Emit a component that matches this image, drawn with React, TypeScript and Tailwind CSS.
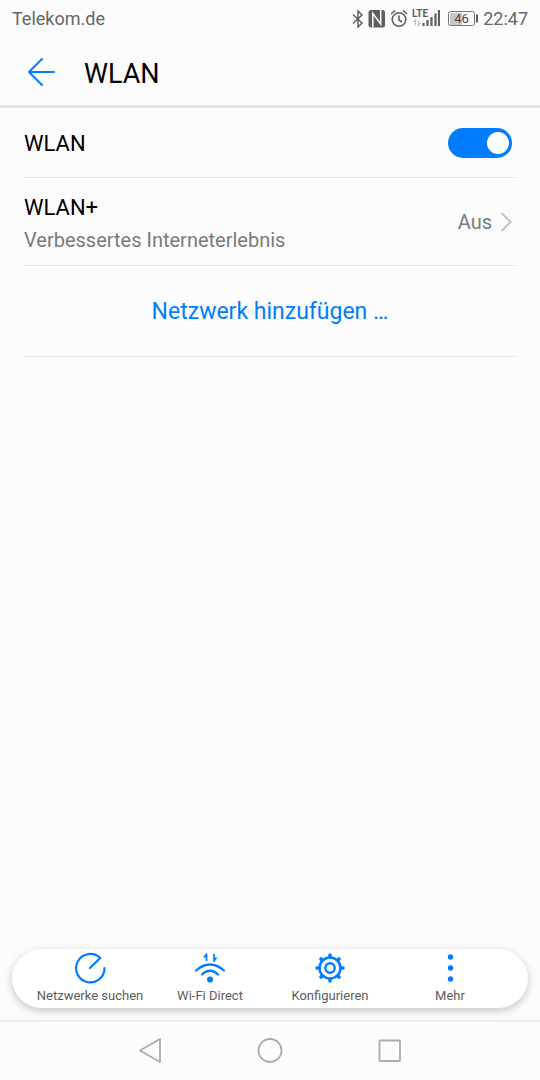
import { useState } from "react";
import type { ReactNode } from "react";

function StatusBar() {
  return (
    <div className="flex h-[38px] items-center justify-between px-3 text-lg text-[#666666]">
      <span>Telekom.de</span>
      <div className="flex items-center">
        {/* Bluetooth */}
        <svg className="mr-1" width="12" height="20" viewBox="0 0 12 20" fill="none" stroke="#5f5f5f" strokeWidth="1.5">
          <path d="M1 5.5 10 14 6 18V2l4 4-9 8.5" />
        </svg>
        {/* NFC */}
        <svg className="mr-1" width="18" height="20" viewBox="0 0 18 20">
          <rect x="0.5" y="1" width="16.5" height="17.5" rx="2.5" fill="#5f5f5f" />
          <path d="M4.800 18.500V4.500L12.700 15V1" fill="none" stroke="#fcfcfc" strokeWidth="1.500" />
        </svg>
        {/* Alarm */}
        <svg className="mr-1" width="18" height="20" viewBox="0 0 18 20" fill="none" stroke="#5f5f5f" strokeWidth="1.6">
          <circle cx="9" cy="10.500" r="6.800" />
          <path d="M9 6.500V11l3 2M1 5l4-3.500M17 5l-4-3.500" />
        </svg>
        {/* Signal */}
        <svg className="mr-2" width="28" height="20" viewBox="0 0 28 20">
          <text x="0" y="8" fontSize="10" fontWeight="700" fill="#5f5f5f" fontFamily="'Liberation Sans Narrow', Roboto, sans-serif">LTE</text>
          <path d="M3.500 16.500V11l-2 2.500M6.500 11v5.500l2-2.500" fill="none" stroke="#c4c4c4" strokeWidth="1.3" />
          <path d="M11.500 14v3M15.500 11v6M19.500 8v9M23.500 4.500V17M27 1v16" fill="none" stroke="#5f5f5f" strokeWidth="2.200" />
        </svg>
        {/* Battery */}
        <svg className="mr-1" width="31" height="20" viewBox="0 0 31 20">
          <rect x="2" y="4" width="12" height="12" fill="#c8c8c8" />
          <rect x="0.5" y="2.500" width="26" height="14" rx="2" fill="none" stroke="#777777" />
          <path d="M29 5.500v8" stroke="#5f5f5f" strokeWidth="2" />
          <text x="13.5" y="14" textAnchor="middle" fontSize="13" fill="#4a4a4a">46</text>
        </svg>
        <span>22:47</span>
      </div>
    </div>
  );
}

function BarButton({ label, children }: { label: string; children: ReactNode }) {
  return (
    <button type="button" className="flex flex-1 flex-col items-center gap-1 text-[13px] leading-4 text-[#5c5c5c]">
      <svg width="32" height="32" viewBox="0 0 32 32" fill="none" stroke="#007dff" strokeWidth="2.200" strokeLinecap="round" strokeLinejoin="round">
        {children}
      </svg>
      <span className="whitespace-nowrap">{label}</span>
    </button>
  );
}

export default function App() {
  const [enabled, setEnabled] = useState(true);

  return (
    <div className="flex min-h-screen flex-col bg-[#fcfcfc] font-[Roboto,sans-serif]">
      <StatusBar />

      <header className="flex h-[70px] items-center gap-7 border-b-3 border-[#e2e2e2] px-6">
        <button type="button" aria-label="Zurück">
          <svg width="32" height="32" viewBox="0 0 32 32" fill="none" stroke="#007dff" strokeWidth="2" strokeLinecap="round" strokeLinejoin="round">
            <path d="M30 16H5M18 3 5 16l13 13" />
          </svg>
        </button>
        <h1 className="pt-1 text-[27px] leading-8 text-black">WLAN</h1>
      </header>

      <main className="flex-1 px-6">
        <div className="flex h-[70px] items-center justify-between border-b border-[#e6e6e6] pr-1">
          <label htmlFor="wlan" className="pt-0.5 text-[22px] text-black">WLAN</label>
          <input
            id="wlan"
            type="checkbox"
            role="switch"
            checked={enabled}
            onChange={(e) => setEnabled(e.target.checked)}
            className="flex h-[30px] w-16 appearance-none items-center rounded-full bg-[#c8c8c8] px-[3px] before:size-[22px] before:rounded-full before:bg-white checked:justify-end checked:bg-[#007dff]"
          />
        </div>

        <button type="button" className="flex h-[88px] w-full items-center justify-between border-b border-[#e6e6e6] pr-1 text-left">
          <span className="flex flex-col pt-1">
            <span className="text-[22px] leading-8 text-black">WLAN+</span>
            <span className="text-xl leading-8 text-[#7a7a7a]">Verbessertes Interneterlebnis</span>
          </span>
          <span className="flex items-center gap-2 text-xl text-[#7a7a7a]">
            Aus
            <svg width="12" height="20" viewBox="0 0 12 20" fill="none" stroke="#c4c4c4" strokeWidth="2">
              <path d="m1.500 1 9 9-9 9" />
            </svg>
          </span>
        </button>

        <button type="button" className="h-[91px] w-full border-b border-[#e6e6e6] pt-0.5 text-[23px] text-[#007dff]">
          Netzwerk hinzufügen …
        </button>
      </main>

      <div className="px-3 pb-3">
        <div className="flex rounded-full bg-white px-[18px] pt-[3px] pb-1 shadow-[0_3px_8px_rgba(0,0,0,0.22)]">
          <BarButton label="Netzwerke suchen">
            <path d="M30.500 16A14.200 14.200 0 1 1 26.200 6L16 16" />
          </BarButton>
          <BarButton label="Wi-Fi Direct">
            <path d="M2 18.500Q16 6.500 30 18.500M8 22.500q8-7.500 16 0" />
            <circle cx="16" cy="27.500" r="3" fill="#007dff" stroke="none" />
            <path d="M12.500 9V2l-2.500 3.500M20 2v7l2.500-3.500" strokeWidth="1.700" strokeLinecap="butt" />
          </BarButton>
          <BarButton label="Konfigurieren">
            <circle cx="16" cy="16" r="10.500" strokeWidth="2.500" />
            <circle cx="16" cy="16" r="4.700" strokeWidth="2.400" />
            <path d="M16 5V3M16 27v2M5 16H3M27 16h2M8.200 8.200 7 7M23.800 8.200 25 7M8.200 23.800 7 25M23.800 23.800 25 25" strokeWidth="3.600" />
          </BarButton>
          <BarButton label="Mehr">
            <g fill="#007dff" stroke="none">
              <circle cx="16.500" cy="5" r="2.700" />
              <circle cx="16.500" cy="16" r="2.700" />
              <circle cx="16.500" cy="27" r="2.700" />
            </g>
          </BarButton>
        </div>
      </div>

      <nav className="flex h-[60px] items-center justify-center border-t-2 border-[#ebebeb]">
        <button type="button" aria-label="Zurück" className="flex w-[120px] justify-center">
          <svg width="28" height="28" viewBox="0 0 28 28" fill="none" stroke="#acacac" strokeWidth="1.800" strokeLinejoin="round">
            <path d="M24 2v23L4 13.500Z" />
          </svg>
        </button>
        <button type="button" aria-label="Startbildschirm" className="flex w-[120px] justify-center">
          <svg width="28" height="28" viewBox="0 0 28 28" fill="none" stroke="#acacac" strokeWidth="1.800">
            <circle cx="14" cy="13.500" r="11.500" />
          </svg>
        </button>
        <button type="button" aria-label="Letzte Apps" className="flex w-[120px] justify-center">
          <svg width="28" height="28" viewBox="0 0 28 28" fill="none" stroke="#acacac" strokeWidth="1.800" strokeLinejoin="round">
            <rect x="3.500" y="3.500" width="20.500" height="20.500" rx="0.500" />
          </svg>
        </button>
      </nav>
    </div>
  );
}
